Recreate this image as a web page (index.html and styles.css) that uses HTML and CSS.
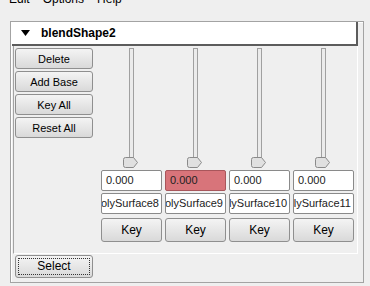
FILE: index.html
```html
<!DOCTYPE html>
<html>
<head>
<meta charset="UTF-8">
<title>Blend Shape</title>
<link rel="stylesheet" href="styles.css">
</head>
<body>
  <div class="menubar">
    <span>Edit</span>
    <span>Options</span>
    <span>Help</span>
  </div>

  <div class="frame">
    <div class="header">
      <svg class="arrow" width="9" height="6" viewBox="0 0 9 6"><polygon points="0,0 9,0 4.5,6" fill="#000"/></svg>
      <span class="title">blendShape2</span>
    </div>

    <div class="panel">
      <div class="actions">
        <button class="btn">Delete</button>
        <button class="btn">Add Base</button>
        <button class="btn">Key All</button>
        <button class="btn">Reset All</button>
      </div>

      <div class="targets">
        <div class="target">
          <div class="slider">
            <div class="track"></div>
            <svg class="thumb" width="15" height="11" viewBox="0 0 15 11"><path d="M2.5 0.5 H10.5 L14.5 5.5 L10.5 10.5 H2.5 Q0.5 10.5 0.5 8.5 V2.5 Q0.5 0.5 2.5 0.5 Z" fill="#e0e0e0" stroke="#8a8a8a"/></svg>
          </div>
          <div class="field">0.000</div>
          <div class="field name"><span>polySurface8</span></div>
          <button class="btn key">Key</button>
        </div>
        <div class="target">
          <div class="slider">
            <div class="track"></div>
            <svg class="thumb" width="15" height="11" viewBox="0 0 15 11"><path d="M2.5 0.5 H10.5 L14.5 5.5 L10.5 10.5 H2.5 Q0.5 10.5 0.5 8.5 V2.5 Q0.5 0.5 2.5 0.5 Z" fill="#e0e0e0" stroke="#8a8a8a"/></svg>
          </div>
          <div class="field keyed">0.000</div>
          <div class="field name"><span>polySurface9</span></div>
          <button class="btn key">Key</button>
        </div>
        <div class="target">
          <div class="slider">
            <div class="track"></div>
            <svg class="thumb" width="15" height="11" viewBox="0 0 15 11"><path d="M2.5 0.5 H10.5 L14.5 5.5 L10.5 10.5 H2.5 Q0.5 10.5 0.5 8.5 V2.5 Q0.5 0.5 2.5 0.5 Z" fill="#e0e0e0" stroke="#8a8a8a"/></svg>
          </div>
          <div class="field">0.000</div>
          <div class="field name"><span>polySurface10</span></div>
          <button class="btn key">Key</button>
        </div>
        <div class="target">
          <div class="slider">
            <div class="track"></div>
            <svg class="thumb" width="15" height="11" viewBox="0 0 15 11"><path d="M2.5 0.5 H10.5 L14.5 5.5 L10.5 10.5 H2.5 Q0.5 10.5 0.5 8.5 V2.5 Q0.5 0.5 2.5 0.5 Z" fill="#e0e0e0" stroke="#8a8a8a"/></svg>
          </div>
          <div class="field">0.000</div>
          <div class="field name"><span>polySurface11</span></div>
          <button class="btn key">Key</button>
        </div>
      </div>
    </div>

    <button class="btn select"><span>Select</span></button>
  </div>
</body>
</html>
```

FILE: styles.css
```css
body {
  margin: 0;
  background: #efefef;
  font-family: "Liberation Sans", Arial, sans-serif;
  font-size: 11px;
  color: #000;
}

.menubar {
  margin-top: -8px;
  height: 29px;
  line-height: 14px;
  padding-left: 9px;
  font-size: 12px;
  display: flex;
  gap: 13px;
}

.frame {
  box-sizing: border-box;
  margin-left: 10px;
  width: 354px;
  height: 262px;
  border: 1px solid #a3a3a3;
  box-shadow: inset 1px 1px 0 #fff;
  padding: 0 5px 0 1px;
}

.header {
  box-sizing: border-box;
  height: 24px;
  background: #fff;
  border-right: 2px solid #5c5c5c;
  border-bottom: 2px solid #5c5c5c;
  display: flex;
  align-items: center;
  padding-left: 9px;
}

.arrow {
  margin-right: 11px;
}

.title {
  font-weight: bold;
  font-size: 12px;
}

.panel {
  box-sizing: border-box;
  margin-left: 1px;
  height: 208px;
  border-left: 1px solid #a3a3a3;
  border-right: 1px solid #fff;
  border-bottom: 1px solid #fff;
  padding: 2px 0 0 1px;
  display: flex;
  gap: 8px;
}

.btn {
  box-sizing: border-box;
  font-family: inherit;
  font-size: 11px;
  color: #000;
  background: linear-gradient(#f4f4f4, #d9d9d9);
  border: 1px solid #8f8f8f;
  border-radius: 3px;
  padding: 0;
}

.actions {
  width: 78px;
  display: flex;
  flex-direction: column;
  gap: 2px;
}

.actions .btn {
  height: 21px;
}

.targets {
  display: flex;
  gap: 3px;
}

.target {
  width: 61px;
  display: flex;
  flex-direction: column;
}

.slider {
  height: 121px;
  display: flex;
  flex-direction: column;
  align-items: center;
}

.track {
  box-sizing: border-box;
  width: 5px;
  height: 111px;
  border: 1px solid #a0a0a0;
  background: #ebebeb;
}

.thumb {
  margin-top: -2px;
  margin-left: -2px;
}

.field {
  box-sizing: border-box;
  height: 21px;
  margin-top: 1px;
  line-height: 19px;
  padding: 0 4px;
  background: #fff;
  border: 1px solid #8a8a8a;
  border-radius: 2px;
  font-size: 11px;
  color: #222;
}

.field.keyed {
  background: #d8747a;
  border-color: #a8565b;
}

.field.name {
  margin-top: 2px;
  display: flex;
  justify-content: flex-end;
  overflow: hidden;
  white-space: nowrap;
  padding: 0 2px;
}

.key {
  height: 24px;
  margin-top: 4px;
  font-size: 12px;
}

.select {
  display: flex;
  margin: 1px 0 0 3px;
  width: 78px;
  height: 23px;
  padding: 2px;
  font-size: 12px;
}

.select span {
  flex: 1;
  border: 1px dotted #333;
  line-height: 15px;
}
```
